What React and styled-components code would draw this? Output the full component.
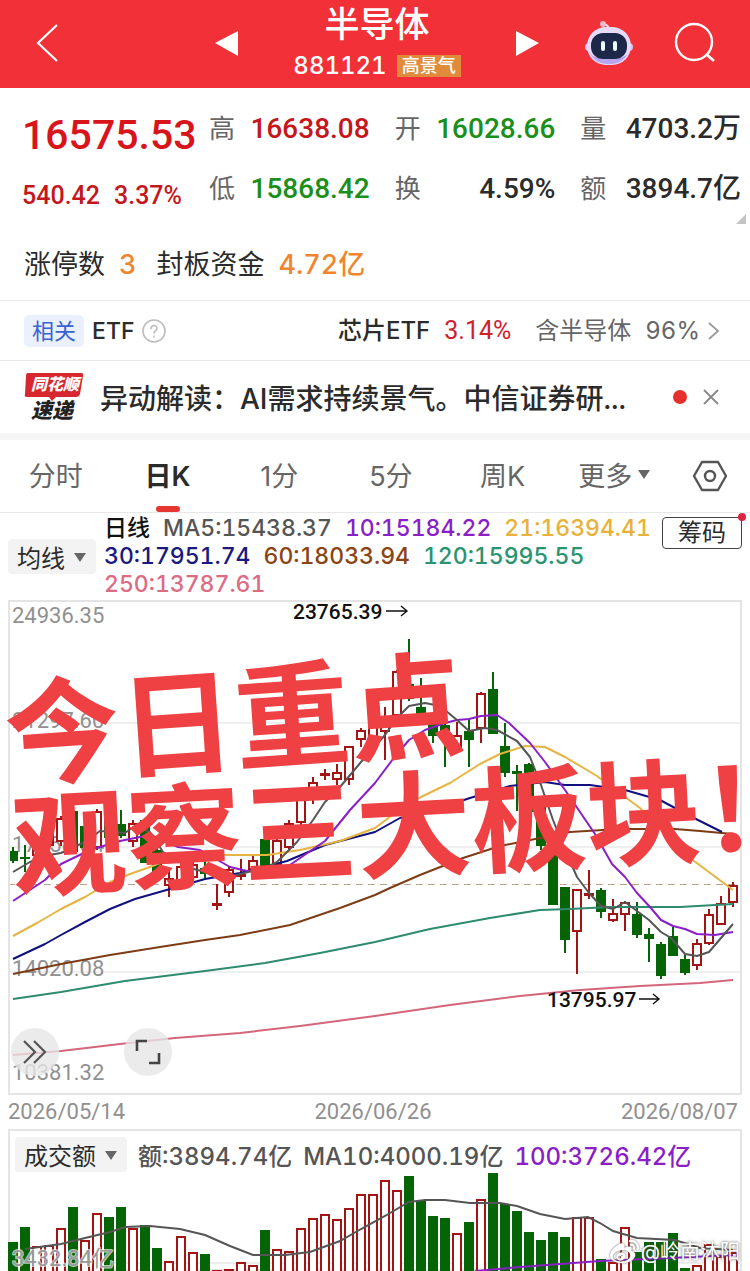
import styled, { createGlobalStyle } from "styled-components";
import { FaWeibo } from "react-icons/fa";

const CJK = `"Noto Sans CJK SC", sans-serif`
const RED = "#a31515"
const GREEN = "#056405"

// [color, open/close top, open/close bottom, high, low]
const candles = [
    ["g", 851, 861, 847, 863], ["g", 857, 859, 845, 872], ["r", 840, 856, 836, 860], ["r", 828, 846, 824, 850],
    ["r", 818, 842, 816, 846], ["g", 811, 852, 811, 854], ["g", 826, 848, 822, 852], ["r", 811, 848, 809, 850],
    ["g", 820, 838, 811, 842], ["g", 824, 836, 810, 838], ["r", 823, 842, 820, 847], ["g", 820, 863, 818, 863],
    ["g", 850, 874, 846, 876], ["r", 878, 886, 870, 897], ["r", 866, 886, 862, 888], ["r", 864, 878, 860, 880],
    ["g", 868, 874, 860, 880], ["r", 903, 905, 884, 910], ["r", 869, 893, 866, 897], ["r", 874, 876, 859, 880],
    ["r", 860, 870, 856, 877], ["g", 839, 868, 839, 868], ["r", 840, 866, 834, 868], ["r", 823, 848, 820, 850],
    ["r", 791, 823, 788, 825], ["r", 782, 800, 777, 804], ["r", 773, 775, 769, 780], ["r", 772, 780, 764, 785],
    ["r", 746, 780, 746, 785], ["r", 730, 740, 728, 747], ["r", 726, 744, 720, 748], ["r", 716, 732, 707, 760],
    ["r", 671, 716, 670, 716], ["g", 684, 699, 639, 701], ["g", 707, 714, 678, 714], ["g", 724, 736, 718, 743],
    ["g", 725, 735, 720, 767], ["r", 735, 748, 722, 748], ["g", 731, 740, 719, 767], ["r", 693, 729, 692, 743],
    ["g", 689, 734, 672, 734], ["g", 746, 773, 723, 777], ["g", 771, 774, 765, 811], ["g", 764, 812, 763, 812],
    ["g", 800, 846, 796, 850], ["g", 835, 905, 832, 905], ["g", 887, 940, 887, 953], ["r", 889, 932, 889, 974],
    ["r", 893, 895, 870, 899], ["g", 890, 912, 888, 918], ["r", 913, 921, 899, 922], ["r", 902, 915, 901, 931],
    ["g", 914, 935, 902, 938], ["g", 934, 939, 928, 962], ["g", 944, 976, 942, 979], ["g", 936, 956, 927, 956],
    ["g", 959, 973, 955, 975], ["r", 943, 966, 939, 970], ["r", 914, 944, 909, 945], ["r", 903, 925, 896, 925],
    ["r", 885, 903, 882, 907],
]

const volumes = [
    1242, 1227, 1246, 1245, 1228, 1207, 1240, 1213, 1217, 1207, 1228, 1225, 1248, 1261, 1236, 1252, 1254, 1270, 1269, 1262,
    1265, 1230, 1249, 1251, 1228, 1218, 1214, 1219, 1208, 1194, 1194, 1180, 1190, 1176, 1200, 1216, 1218, 1233, 1222, 1199,
    1173, 1204, 1211, 1232, 1240, 1232, 1237, 1217, 1217, 1259, 1262, 1227, 1252, 1242, 1242, 1233, 1268, 1265, 1244, 1256, 1252,
]
const greenVolumes = [0, 1, 5, 8, 9, 11, 12, 16, 21, 33, 34, 35, 36, 38, 40, 41, 42, 43, 44, 45, 46, 49, 52, 53, 54, 55, 56]

const averages = [
    { color: "#d4667b", points: "13,1055 61,1051 120,1044 175,1038 240,1033 300,1026 375,1016 450,1005 520,996 580,990 640,986 700,983 733,980" },
    { color: "#2e8b6f", points: "13,999 61,992 125,981 205,971 265,963 320,953 375,942 430,929 490,918 540,910 570,909 610,907 680,907 733,904" },
    { color: "#7d3c16", points: "13,974 61,964 110,955 160,947 205,940 240,935 290,925 340,908 375,895 390,888 420,875 463,858 500,846 540,838 570,832 620,829 675,829 700,831 733,834" },
    { color: "#10107e", points: "13,959 45,944 61,935 85,922 110,909 135,899 170,889 205,879 240,873 287,861 325,845 375,832 400,818 440,808 470,798 510,786 545,782 565,785 590,785 625,790 660,800 690,816 722,832" },
    { color: "#e6b440", points: "13,936 37,923 61,909 85,897 110,882 130,874 150,867 175,857 200,855 233,855 267,855 300,850 340,841 375,828 395,813 421,797 450,783 480,764 500,754 525,746 545,747 565,757 597,776 625,797 640,808 690,858 733,890" },
    { color: "#8a1fc8", points: "13,901 45,880 61,864 90,850 120,841 150,835 178,847 200,850 230,867 247,871 265,870 287,867 325,841 350,810 375,783 393,759 409,740 425,730 445,723 457,720 469,719 481,716 497,715 509,723 530,743 545,762 565,790 580,812 595,834 612,864 625,877 637,893 650,907 661,920 673,926 685,929 697,934 715,935 733,932" },
    { color: "#555555", points: "13,872 30,862 49,855 61,853 85,842 100,831 125,833 135,826 150,832 163,852 190,868 205,872 230,877 248,872 265,868 277,862 297,842 313,820 325,802 340,787 361,762 385,735 397,718 409,706 425,703 440,706 457,720 469,731 485,728 497,730 517,741 530,757 541,785 553,820 565,850 577,877 589,893 601,906 613,909 625,902 637,911 649,920 661,932 671,938 685,954 697,956 709,952 733,924" },
]

const priceLabels = [
    ["24936.35", 623], ["21297.60", 728], ["17658.84", 852], ["14020.08", 976], ["10381.32", 1080],
]

const stats = [
    { label: "高", value: "16638.08", color: "#c4161c" },
    { label: "开", value: "16028.66", color: "#1a8f1a" },
    { label: "量", value: "4703.2万", color: "#2b2b2b" },
    { label: "低", value: "15868.42", color: "#1a8f1a" },
    { label: "换", value: "4.59%", color: "#2b2b2b" },
    { label: "额", value: "3894.7亿", color: "#2b2b2b" },
]

const tabs = ["分时", "日K", "1分", "5分", "周K"]

const legend = [
    [["日线", "#111111"], ["MA5:15438.37", "#555555"], ["10:15184.22", "#8a1fc8"], ["21:16394.41", "#e8b13a"]],
    [["30:17951.74", "#191980"], ["60:18033.94", "#8b4513"], ["120:15995.55", "#2a9470"]],
    [["250:13787.61", "#dc6c83"]],
]

function Bar({ x, top, bottom, color }) {
    if (color === "g") return <rect x={x - 5} y={top} width="10" height={bottom - top} fill={GREEN} />
    return <rect x={x - 4} y={top + 1} width="8" height={Math.max(bottom - top - 2, 1)} fill="#fff" stroke={RED} strokeWidth="2" />
}

function Candle({ x, data }) {
    const [color, top, bottom, high, low] = data
    return (
        <g>
            <path d={`M${x} ${high}V${top}M${x} ${bottom}V${low}`} stroke={color === "g" ? GREEN : RED} strokeWidth="2" />
            <Bar x={x} top={top} bottom={bottom} color={color} />
        </g>
    )
}

function PriceChart() {
    return (
        <Chart viewBox="8 600 734 495" role="img" aria-label="日K">
            <path d="M8 723H742M8 847H742M8 972H742" stroke="#efefef" strokeWidth="2" />
            <path d="M8 884.500H742" stroke="#b9a58c" strokeDasharray="7 5" />
            {priceLabels.map(([text, y]) => <AxisText key={text} x="12" y={y}>{text}</AxisText>)}
            {candles.map((data, i) => <Candle key={i} x={13 + i * 12} data={data} />)}
            {averages.map(({ color, points }) => (
                <polyline key={color} points={points} fill="none" stroke={color} strokeWidth="2" strokeLinejoin="round" />
            ))}
            <rect x="9" y="601" width="732" height="493" fill="none" stroke="#e4e4e4" strokeWidth="2" />
            <PeakText x="293" y="619">23765.39</PeakText>
            <path d="M386 611H407M401 606L407 611L401 616" fill="none" stroke="#111" strokeWidth="1.4" />
            <PeakText x="547" y="1007">13795.97</PeakText>
            <path d="M639 999H659M653 994L659 999L653 1004" fill="none" stroke="#111" strokeWidth="1.4" />
            <Headline transform="translate(8 778) rotate(-4)">今日重点</Headline>
            <Headline transform="translate(14 889) rotate(-3)">观察三大板块！</Headline>
        </Chart>
    )
}

function VolumeChart() {
    return (
        <Chart viewBox="8 1172 734 99" role="img" aria-label="成交额">
            <path d="M8 1263H742" stroke="#ececec" strokeWidth="2" />
            {volumes.map((top, i) => (
                <Bar key={i} x={13 + i * 12} top={top} bottom={1280} color={greenVolumes.includes(i) ? "g" : "r"} />
            ))}
            <polyline fill="none" stroke="#555" strokeWidth="2" points="25,1249 61,1244 85,1238 110,1232 125,1227 150,1226 180,1229 205,1235 230,1246 253,1255 285,1255 310,1252 340,1241 361,1229 385,1216 409,1202 425,1200 445,1200 470,1203 500,1203 517,1206 540,1214 565,1219 588,1217 600,1223 613,1231 637,1238 675,1240 700,1248 733,1250" />
            <polyline fill="none" stroke="#8a1fc8" strokeWidth="2" points="475,1271 520,1267 600,1261 670,1258 733,1255" />
            <VolumeText x="12" y="1266">3432.84亿</VolumeText>
        </Chart>
    )
}

function Caret() {
    return <svg width="12" height="9" viewBox="0 0 12 9"><path d="M0 0H12L6 9Z" fill="#666" /></svg>
}

function Robot() {
    return (
        <svg width="50" height="46" viewBox="0 0 50 46">
            <path d="M25 9C25 4 22 4 20 3" fill="none" stroke="#f3d9ea" strokeWidth="2" />
            <circle cx="19" cy="3" r="3" fill="#f5b8c8" />
            <circle cx="5" cy="26" r="4" fill="#cfc6f5" />
            <circle cx="45" cy="26" r="4" fill="#cfc6f5" />
            <rect x="3" y="6" width="44" height="38" rx="19" fill="#e6dcfa" />
            <path d="M6 32C12 47 38 47 44 32C40 40 10 40 6 32Z" fill="#b9a5ee" />
            <rect x="7" y="12" width="36" height="26" rx="12" fill="#1d2747" />
            <rect x="17" y="20" width="4" height="10" rx="2" fill="#e8fbff" />
            <rect x="29" y="20" width="4" height="10" rx="2" fill="#e8fbff" />
        </svg>
    )
}

export default function App() {
    return (
        <Page>
            <GlobalStyle />
            <Header>
                <IconButton aria-label="返回">
                    <svg width="24" height="40" viewBox="0 0 24 40"><path d="M23 1L4 19L23 37" fill="none" stroke="#fff" strokeWidth="2.2" /></svg>
                </IconButton>
                <Switcher>
                    <IconButton aria-label="上一个">
                        <svg width="24" height="26" viewBox="0 0 24 26"><path d="M24 0V25L1 12Z" fill="#fff" /></svg>
                    </IconButton>
                    <TitleBlock>
                        <h1>半导体</h1>
                        <p>881121<span>高景气</span></p>
                    </TitleBlock>
                    <IconButton aria-label="下一个">
                        <svg width="24" height="26" viewBox="0 0 24 26"><path d="M0 0V25L23 12Z" fill="#fff" /></svg>
                    </IconButton>
                </Switcher>
                <HeaderTools>
                    <IconButton aria-label="助手"><Robot /></IconButton>
                    <IconButton aria-label="搜索">
                        <svg width="42" height="42" viewBox="0 0 42 42">
                            <circle cx="20" cy="19" r="18" fill="none" stroke="#fff" strokeWidth="2.4" />
                            <path d="M32 31L40 38" stroke="#fff" strokeWidth="2.8" />
                        </svg>
                    </IconButton>
                </HeaderTools>
            </Header>

            <Quote>
                <Price>
                    <strong>16575.53</strong>
                    <p><span>540.42</span><span>3.37%</span></p>
                </Price>
                <Stats>
                    {stats.map(({ label, value, color }) => (
                        <Stat key={label} $color={color}><dt>{label}</dt><dd>{value}</dd></Stat>
                    ))}
                </Stats>
                <Corner viewBox="0 0 10 10"><path d="M10 0V10H0Z" fill="#c4c4c4" /></Corner>
            </Quote>

            <LimitRow>
                <span>涨停数</span><em>3</em><span>封板资金</span><em>4.72亿</em>
            </LimitRow>

            <EtfRow href="#etf">
                <Tag>相关</Tag>
                <b>ETF</b>
                <svg width="24" height="24" viewBox="0 0 24 24" fill="none" stroke="#bdbdbd" strokeWidth="1.6">
                    <circle cx="12" cy="12" r="11" />
                    <path d="M9 10C9 5.500 15 5.500 15 9.500C15 12 12 11.500 12 14.500M12 16.500V18.500" />
                </svg>
                <EtfInfo>
                    <b>芯片ETF</b>
                    <Rise>3.14%</Rise>
                    <span>含半导体</span>
                    <span>96%</span>
                </EtfInfo>
                <svg width="12" height="18" viewBox="0 0 12 18"><path d="M1 1L10 9L1 17" fill="none" stroke="#999" strokeWidth="1.8" /></svg>
            </EtfRow>

            <NewsRow>
                <svg width="60" height="50" viewBox="0 0 60 50">
                    <path d="M4 1H57Q60 1 59 4L56 22Q55 25 52 25H32L28 29L25 25H3Q0 25 1 22L2 4Q2 1 4 1Z" fill="#d8282f" />
                    <LogoText x="7" y="18" fontSize="16" fill="#fff">同花顺</LogoText>
                    <LogoText x="7" y="46" fontSize="21" fill="#222">速递</LogoText>
                </svg>
                <a href="#news">异动解读：AI需求持续景气。中信证券研...</a>
                <RedDot />
                <IconButton aria-label="关闭">
                    <svg width="16" height="16" viewBox="0 0 16 16"><path d="M1 1L15 15M15 1L1 15" stroke="#888" strokeWidth="1.8" /></svg>
                </IconButton>
            </NewsRow>

            <Tabs>
                {tabs.map((tab) => <Tab key={tab} $active={tab === "日K"}>{tab}</Tab>)}
                <Tab>更多<Caret /></Tab>
                <SettingsButton aria-label="设置">
                    <svg width="36" height="32" viewBox="0 0 36 32" fill="none" stroke="#555" strokeWidth="2.4" strokeLinejoin="round">
                        <path d="M10 2H26L34 16L26 30H10L2 16Z" />
                        <circle cx="18" cy="16" r="5" />
                    </svg>
                </SettingsButton>
            </Tabs>

            <LegendBar>
                <Picker>
                    <select aria-label="指标" defaultValue="均线"><option>均线</option></select>
                    <Caret />
                </Picker>
                <Legend>
                    {legend.map((row, i) => (
                        <p key={i}>
                            {row.map(([text, color]) => <LegendItem key={text} $color={color}>{text}</LegendItem>)}
                        </p>
                    ))}
                </Legend>
                <ChipButton>筹码</ChipButton>
            </LegendBar>

            <ChartBox>
                <PriceChart />
                <FloatButtons>
                    <button aria-label="展开">
                        <svg width="24" height="24" viewBox="0 0 24 24"><path d="M1 1L12 12L1 23M11 1L22 12L11 23" fill="none" stroke="#555" strokeWidth="2.2" /></svg>
                    </button>
                    <button aria-label="全屏">
                        <svg width="26" height="26" viewBox="0 0 26 26"><path d="M2 12V2H12M24 14V24H14" fill="none" stroke="#444" strokeWidth="2.6" /></svg>
                    </button>
                </FloatButtons>
            </ChartBox>

            <Dates><span>2026/05/14</span><span>2026/06/26</span><span>2026/08/07</span></Dates>

            <VolumePanel>
                <VolumeHead>
                    <Picker>
                        <select aria-label="副图" defaultValue="成交额"><option>成交额</option></select>
                        <Caret />
                    </Picker>
                    <LegendItem $large $color="#555555">额:3894.74亿</LegendItem>
                    <LegendItem $large $color="#555555">MA10:4000.19亿</LegendItem>
                    <LegendItem $large $color="#8a1fc8">100:3726.42亿</LegendItem>
                </VolumeHead>
                <VolumeChart />
                <Watermark><FaWeibo size={29} />@岭南沐阳</Watermark>
            </VolumePanel>
        </Page>
    )
}

const GlobalStyle = createGlobalStyle`
    *{
        box-sizing: border-box;
        margin: 0;
        padding: 0;
    }
    body{
        background-color: #fff;
        font-family: Inter, ${CJK};
        font-variant-numeric: tabular-nums;
        color: #2b2b2b;
    }
    button{
        border: none;
        background: none;
        font-family: inherit;
    }
    a{
        color: inherit;
        text-decoration: none;
    }
    svg{
        flex-shrink: 0;
        overflow: visible;
    }
`
const Page = styled.main`
    width: 100%;
    overflow: hidden;
`
const Header = styled.header`
    height: 88px;
    padding: 0 34px;
    background-color: #f23038;
    color: #fff;
    display: flex;
    align-items: center;
    justify-content: space-between;
`
const IconButton = styled.button`
    display: flex;
    align-items: center;
`
const Switcher = styled.div`
    width: 326px;
    margin-left: 112px;
    display: flex;
    align-items: center;
    justify-content: space-between;
`
const TitleBlock = styled.div`
    h1{
        margin-bottom: 4px;
        font-family: ${CJK};
        font-size: 35px;
        line-height: 40px;
        font-weight: 500;
        text-align: center;
    }
    p{
        display: flex;
        align-items: center;
        gap: 10px;
        font-size: 24px;
        line-height: 40px;
        font-weight: 500;
    }
    span{
        padding: 0 5px;
        background-color: #e08b3c;
        font-size: 18px;
        line-height: 22px;
    }
`
const HeaderTools = styled.div`
    display: flex;
    align-items: center;
    gap: 40px;
`
const Quote = styled.section`
    position: relative;
    padding: 10px 9px 0 22px;
    display: flex;
`
const Price = styled.div`
    width: 187px;
    height: 120px;
    font-family: Roboto, ${CJK};
    font-weight: 500;
    color: #d8151b;

    strong{
        display: block;
        font-size: 41px;
        line-height: 74px;
        font-weight: 500;
    }
    p{
        display: flex;
        gap: 14px;
        font-size: 25px;
        line-height: 48px;
        color: #c4161c;
    }
`
const Stats = styled.dl`
    flex: 1;
    display: grid;
    grid-template-columns: repeat(3, 1fr);
    grid-auto-rows: 60px;
    column-gap: 25px;
`
const Stat = styled.div`
    display: flex;
    align-items: baseline;
    justify-content: space-between;
    font-size: 28px;
    line-height: 58px;
    white-space: nowrap;

    dt{
        font-family: ${CJK};
        font-size: 26px;
        color: #666;
    }
    dd{
        font-family: Roboto, ${CJK};
        font-weight: 500;
        color: ${({ $color }) => $color};
    }
`
const Corner = styled.svg`
    position: absolute;
    right: 4px;
    bottom: -6px;
    width: 10px;
    height: 10px;
`
const LimitRow = styled.section`
    height: 83px;
    padding: 24px 24px 0;
    border-bottom: 1px solid #e8e8e8;
    display: flex;
    gap: 14px;
    font-size: 27px;
    line-height: 46px;

    em{
        margin-right: 6px;
        font-style: normal;
        font-weight: 500;
        color: #f0852d;
    }
`
const EtfRow = styled.a`
    height: 60px;
    padding: 0 30px 0 24px;
    border-bottom: 1px solid #e8e8e8;
    display: flex;
    align-items: center;
    gap: 8px;
    font-size: 23px;

    b{
        font-weight: 500;
    }
`
const Tag = styled.span`
    padding: 0 8px;
    border-radius: 5px;
    background-color: #eaf0fd;
    color: #3a62d0;
    font-size: 22px;
    line-height: 32px;
`
const EtfInfo = styled.span`
    flex: 1;
    display: flex;
    align-items: baseline;
    justify-content: flex-end;
    gap: 14px;
    font-size: 24px;
    line-height: 32px;
    color: #666;

    b{
        color: #2b2b2b;
    }
`
const Rise = styled.span`
    margin-right: 10px;
    font-family: Roboto, ${CJK};
    font-size: 25px;
    color: #d0202a;
`
const NewsRow = styled.section`
    height: 79px;
    padding: 0 31px 0 24px;
    border-bottom: 7px solid #f5f5f5;
    display: flex;
    align-items: center;

    a{
        flex: 1;
        margin-left: 16px;
        font-size: 28px;
        font-weight: 500;
        white-space: nowrap;
    }
`
const LogoText = styled.text`
    font-family: ${CJK};
    font-weight: 900;
    font-style: italic;
`
const RedDot = styled.i`
    width: 14px;
    height: 14px;
    margin-right: 16px;
    border-radius: 50%;
    background-color: #e5302d;
`
const Tabs = styled.nav`
    height: 73px;
    border-bottom: 1px solid #e8e8e8;
    display: flex;
`
const Tab = styled.button`
    position: relative;
    flex: 1;
    padding-bottom: 3px;
    display: flex;
    align-items: center;
    justify-content: center;
    gap: 6px;
    font-size: 27px;
    font-weight: ${({ $active }) => $active ? 600 : 400};
    color: ${({ $active }) => $active ? "#2b2b2b" : "#666"};

    &::after{
        content: "";
        display: ${({ $active }) => $active ? "block" : "none"};
        position: absolute;
        bottom: 0;
        width: 24px;
        height: 6px;
        border-radius: 3px;
        background-color: #e5372f;
    }
`
const SettingsButton = styled(IconButton)`
    width: 80px;
    justify-content: center;
`
const LegendBar = styled.section`
    padding: 1px 8px 2px;
    display: flex;
    align-items: center;
`
const Picker = styled.label`
    position: relative;
    flex-shrink: 0;

    select{
        appearance: none;
        display: block;
        height: 35px;
        padding: 0 31px 0 9px;
        border: none;
        border-radius: 4px;
        background-color: #f3f3f3;
        font-family: ${CJK};
        font-size: 24px;
        color: #2b2b2b;
    }
    svg{
        position: absolute;
        right: 10px;
        top: 14px;
        pointer-events: none;
    }
`
const Legend = styled.div`
    flex: 1;
    margin-left: 8px;

    p{
        display: flex;
        gap: 13px;
        height: 28px;
        line-height: 28px;
    }
`
const LegendItem = styled.span`
    font-size: ${({ $large }) => $large ? "24px" : "23px"};
    font-weight: 500;
    white-space: nowrap;
    color: ${({ $color }) => $color};
`
const ChipButton = styled.button`
    position: relative;
    align-self: flex-start;
    margin-top: 3px;
    height: 32px;
    padding: 0 15px;
    border: 1px solid #444;
    border-radius: 4px;
    font-size: 24px;
    line-height: 30px;
    white-space: nowrap;
    color: #2b2b2b;

    &::after{
        content: "";
        position: absolute;
        top: -5px;
        right: -5px;
        width: 8px;
        height: 8px;
        border-radius: 50%;
        background-color: #dc2440;
    }
`
const Chart = styled.svg`
    display: block;
    width: 100%;
`
const ChartBox = styled.section`
    position: relative;
    margin: 0 8px;
`
const AxisText = styled.text`
    font-family: Roboto, ${CJK};
    font-size: 22px;
    fill: #909090;
`
const PeakText = styled(AxisText)`
    font-size: 21px;
    font-weight: 500;
    fill: #111;
`
const VolumeText = styled(AxisText)`
    fill: #999;
    stroke: rgb(255,255,255, 0.7);
    stroke-width: 2px;
    paint-order: stroke;
`
const Headline = styled.text`
    font-family: ${CJK};
    font-size: 115px;
    font-weight: 700;
    fill: #ef4043;
`
const FloatButtons = styled.div`
    position: absolute;
    left: 3px;
    bottom: 19px;
    display: flex;
    gap: 65px;

    button{
        width: 48px;
        height: 48px;
        border-radius: 50%;
        background-color: rgb(230,230,230, 0.8);
        display: flex;
        align-items: center;
        justify-content: center;
    }
`
const Dates = styled.div`
    padding: 0 12px 0 8px;
    display: flex;
    justify-content: space-between;
    font-family: Roboto, ${CJK};
    font-size: 22px;
    line-height: 34px;
    color: #909090;
`
const VolumePanel = styled.section`
    position: relative;
    margin: 0 8px;
    box-shadow: inset 0 0 0 2px #e4e4e4;
    overflow: hidden;
`
const VolumeHead = styled.div`
    height: 43px;
    padding: 8px 7px 0;
    display: flex;
    align-items: center;
    gap: 11px;
`
const Watermark = styled.p`
    position: absolute;
    right: 2px;
    bottom: 4px;
    display: flex;
    align-items: center;
    gap: 2px;
    color: #fff;
    font-size: 20px;
    line-height: 30px;
    text-shadow: 0 0 3px #444;

    svg{
        filter: drop-shadow(0 0 1px #666);
    }
`
